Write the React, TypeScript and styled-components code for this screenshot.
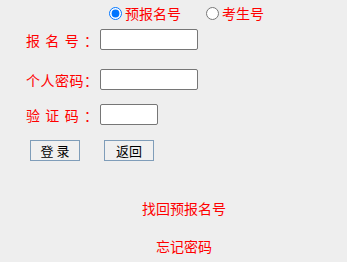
import React, { useState } from "react";
import styled, { createGlobalStyle } from "styled-components";

const GlobalStyle = createGlobalStyle`
  html, body {
    margin: 0;
    padding: 0;
    background: #eeeeee;
  }
  body {
    font-family: "Noto Sans CJK SC", "Noto Sans", sans-serif;
  }
`;

const fields = [
  { label: "报名号：", width: 98, top: 6 },
  { label: "个人密码：", width: 98, top: 19 },
  { label: "验证码：", width: 58, top: 14 },
];

const App = () => {
  const [kind, setKind] = useState<string>("pre");

  return (
    <Page>
      <GlobalStyle />
      <RadioRow>
        <RadioLabel>
          <Radio
            type="radio"
            name="kind"
            checked={kind === "pre"}
            onChange={() => setKind("pre")}
          />
          预报名号
        </RadioLabel>
        <RadioLabel>
          <Radio
            type="radio"
            name="kind"
            checked={kind === "exam"}
            onChange={() => setKind("exam")}
          />
          考生号
        </RadioLabel>
      </RadioRow>

      {fields.map((f, idx) => (
        <FieldRow key={idx} $top={f.top}>
          <Label>
            {f.label.split("").map((ch, i) => (
              <span key={i}>{ch}</span>
            ))}
          </Label>
          <TextInput type="text" $width={f.width} />
        </FieldRow>
      ))}

      <ButtonRow>
        <Button>登&nbsp;录</Button>
        <Button>返回</Button>
      </ButtonRow>

      <LinkBox>
        <Link href="#" $top={37}>找回预报名号</Link>
        <Link href="#" $top={18}>忘记密码</Link>
      </LinkBox>
    </Page>
  );
};

const Page = styled.div`
  display: flex;
  flex-direction: column;
  width: 347px;
  min-height: 262px;
  color: #ff0000;
  font-size: 14px;
`;

const RadioRow = styled.div`
  display: flex;
  align-items: center;
  gap: 25px;
  height: 20px;
  margin-top: 3px;
  padding-left: 109px;
`;

const RadioLabel = styled.label`
  display: flex;
  align-items: center;
  gap: 3px;
  line-height: 20px;
  color: #ff0000;
`;

const Radio = styled.input`
  width: 13px;
  height: 13px;
  margin: 0;
`;

const FieldRow = styled.div<{ $top: number }>`
  display: flex;
  align-items: center;
  gap: 2px;
  height: 21px;
  margin-top: ${(p) => p.$top}px;
  padding-left: 26px;
`;

const Label = styled.div`
  display: flex;
  justify-content: space-between;
  width: 72px;
  line-height: 20px;
  color: #ff0000;
`;

const TextInput = styled.input<{ $width: number }>`
  box-sizing: border-box;
  width: ${(p) => p.$width}px;
  height: 21px;
  margin: 0;
  padding: 1px 2px;
  border: 1px solid #767676;
  border-radius: 2px;
  background: #ffffff;
  font-size: 13px;
`;

const ButtonRow = styled.div`
  display: flex;
  gap: 24px;
  margin-top: 15px;
  padding-left: 30px;
`;

const Button = styled.button`
  box-sizing: border-box;
  width: 50px;
  height: 21px;
  padding: 0;
  border: 1px solid #7f9db9;
  background: #f0f0f0;
  color: #000000;
  font-family: "Noto Sans CJK SC", sans-serif;
  font-size: 13px;
  line-height: 19px;
`;

const LinkBox = styled.div`
  display: flex;
  flex-direction: column;
  align-items: center;
  padding-left: 21px;
`;

const Link = styled.a<{ $top: number }>`
  margin-top: ${(p) => p.$top}px;
  line-height: 20px;
  color: #ff0000;
  text-decoration: none;
`;

export default App;
